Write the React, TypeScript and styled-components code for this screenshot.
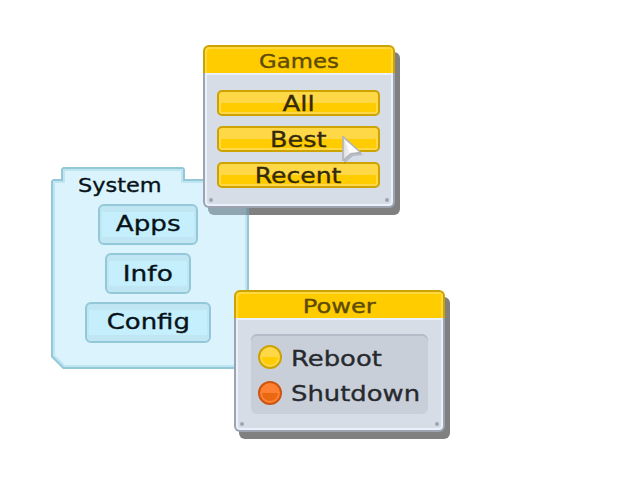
import React from 'react';
import styled, { createGlobalStyle } from 'styled-components';

const Global = createGlobalStyle`
  * { box-sizing: border-box; }
  body { margin: 0; background: #fff; }
`;

const Desktop = styled.main`
  position: relative;
  width: 640px;
  height: 480px;
  overflow: hidden;
  background: #fff;
  font-family: 'DejaVu Sans', sans-serif;
`;

const Label = styled.span<{ $size?: number; $stretch: number; $left?: boolean; $dy?: number }>`
  display: block;
  white-space: nowrap;
  line-height: 26px;
  font-size: ${p => p.$size ?? 22}px;
  -webkit-text-stroke: 0.35px currentColor;
  transform: translateY(${p => p.$dy ?? 0}px) scaleX(${p => p.$stretch});
  transform-origin: ${p => (p.$left ? 'left' : 'center')} center;
`;

/* Grey windows */
const WindowShadow = styled.div<{ $x: number; $y: number; $w: number; $h: number; $fill?: string }>`
  position: absolute;
  left: ${p => p.$x + 5}px;
  top: ${p => p.$y + 7}px;
  width: ${p => p.$w}px;
  height: ${p => p.$h}px;
  border-radius: 6px;
  background: ${p => p.$fill ?? '#808080'};
`;

const WindowFrame = styled.section<{ $x: number; $y: number; $w: number; $h: number }>`
  position: absolute;
  left: ${p => p.$x}px;
  top: ${p => p.$y}px;
  width: ${p => p.$w}px;
  height: ${p => p.$h}px;
  display: flex;
  flex-direction: column;
  border-radius: 6px;
`;

const TitleBar = styled.header`
  flex: 0 0 28px;
  display: flex;
  justify-content: center;
  align-items: center;
  border: 2px solid #cca300;
  border-bottom: 0;
  border-radius: 6px 6px 0 0;
  background: #ffcc00;
  box-shadow: inset 2px 2px #ffd83f, inset -2px 0 #ffd83f;
  color: #5c4a06;
`;

const WindowBody = styled.div<{ $pad: string }>`
  position: relative;
  flex: 1;
  display: flex;
  flex-direction: column;
  gap: 10px;
  padding: ${p => p.$pad};
  border: 2px solid #9ba4b0;
  border-top: 0;
  border-radius: 0 0 6px 6px;
  background: #d6dde7;
  box-shadow: inset 0 0 0 2px #eaf1fb;
`;

const Screw = styled.i<{ $right?: boolean }>`
  position: absolute;
  bottom: 4px;
  ${p => (p.$right ? 'right: 4px;' : 'left: 4px;')}
  width: 4px;
  height: 4px;
  border-radius: 50%;
  background: #9ba4b0;
`;

const GoldButton = styled.div`
  height: 26px;
  display: flex;
  justify-content: center;
  align-items: center;
  border: 2px solid #cca300;
  border-radius: 5px;
  color: #332a0a;
  background: linear-gradient(#ffcc00, #ffcc00) 2px 11px / calc(100% - 4px) 9px no-repeat #ffd847;
`;

const Group = styled.div`
  height: 80px;
  display: flex;
  flex-direction: column;
  gap: 12px;
  padding: 11px 7px;
  border-radius: 6px;
  background: #c9cfd9;
  box-shadow: inset 0 2px #b5bcc9;
  color: #262a2e;
`;

const Option = styled.div`
  height: 24px;
  display: flex;
  align-items: center;
  gap: 9px;
`;

const Bulb = styled.span<{ $edge: string; $top: string; $bottom: string }>`
  flex: none;
  width: 24px;
  height: 24px;
  display: flex;
  justify-content: center;
  align-items: flex-end;
  padding-bottom: 2px;
  border: 2px solid ${p => p.$edge};
  border-radius: 50%;
  background: ${p => p.$top};
  &::after {
    content: '';
    width: 16px;
    height: 8px;
    border-radius: 0 0 8px 8px;
    background: ${p => p.$bottom};
  }
`;

/* Blue folder panel */
const Folder = styled.section`
  position: absolute;
  left: 51px;
  top: 167px;
  width: 198px;
  height: 202px;
`;

const FolderLayer = styled.div<{ $fill: string; $shape: string }>`
  position: absolute;
  inset: 0;
  background: ${p => p.$fill};
  clip-path: polygon(${p => p.$shape});
`;

const FolderContent = styled.div`
  position: relative;
  display: flex;
  flex-direction: column;
  align-items: center;
  gap: 8px;
  padding: 4px 4px 0 0;
  color: #071318;
`;

const FolderTitle = styled.div`
  align-self: stretch;
  height: 25px;
  padding-left: 27px;
`;

const IceButton = styled.div<{ $w: number }>`
  width: ${p => p.$w}px;
  height: 41px;
  display: flex;
  justify-content: center;
  align-items: center;
  border: 2px solid #94c8d8;
  border-radius: 6px;
  background:
    linear-gradient(#c5effd, #c5effd) 2px 6px / calc(100% - 4px) 25px no-repeat,
    #c0e6f3;
`;

const Pointer = styled.svg`
  position: absolute;
  left: 338px;
  top: 132px;
`;

const px = (points: number[][]) => points.map(([x, y]) => `${x}px ${y}px`).join(', ');

const edge = px([[0, 14], [2, 12], [10, 12], [10, 2], [12, 0], [132, 0], [134, 2], [134, 12], [196, 12], [198, 14], [198, 202], [12, 202], [0, 190]]);
const rim = px([[2, 14], [12, 14], [12, 2], [132, 2], [132, 14], [196, 14], [196, 200], [13, 200], [2, 189]]);
const face = px([[4, 16], [14, 16], [14, 4], [130, 4], [130, 16], [194, 16], [194, 198], [14, 198], [4, 188]]);

const games = { $x: 203, $y: 45, $w: 192, $h: 163 };
const power = { $x: 234, $y: 290, $w: 211, $h: 142 };

export default function App() {
  return (
    <>
      <Global />
      <Desktop>
        <Folder>
          <FolderLayer $fill="#94c8d8" $shape={edge} />
          <FolderLayer $fill="#bfe5f1" $shape={rim} />
          <FolderLayer $fill="#daf3fd" $shape={face} />
          <FolderContent>
            <FolderTitle><Label $size={20} $stretch={1.12} $dy={1} $left>System</Label></FolderTitle>
            <IceButton $w={100}><Label $stretch={1.19} $dy={-1}>Apps</Label></IceButton>
            <IceButton $w={86}><Label $stretch={1.2}>Info</Label></IceButton>
            <IceButton $w={126}><Label $stretch={1.18} $dy={-1}>Config</Label></IceButton>
          </FolderContent>
        </Folder>

        <WindowShadow {...games} $fill="linear-gradient(90deg, #8fa6b1 38px, #7999a6 38px 41px, #808080 41px)" />
        <WindowFrame {...games}>
          <TitleBar><Label $size={20} $stretch={1.14} $dy={1}>Games</Label></TitleBar>
          <WindowBody $pad="17px 13px 0 12px">
            <GoldButton><Label $stretch={1.18} $dy={1}>All</Label></GoldButton>
            <GoldButton><Label $stretch={1.16} $dy={1}>Best</Label></GoldButton>
            <GoldButton><Label $stretch={1.14} $dy={1}>Recent</Label></GoldButton>
            <Screw /><Screw $right />
          </WindowBody>
        </WindowFrame>

        <WindowShadow {...power} />
        <WindowFrame {...power}>
          <TitleBar><Label $size={20} $stretch={1.21} $dy={1}>Power</Label></TitleBar>
          <WindowBody $pad="16px 15px 0">
            <Group>
              <Option>
                <Bulb $edge="#cca300" $top="#ffd847" $bottom="#ffcc00" />
                <Label $stretch={1.175} $dy={2} $left>Reboot</Label>
              </Option>
              <Option>
                <Bulb $edge="#cc5512" $top="#ff8033" $bottom="#eb6813" />
                <Label $stretch={1.175} $dy={1} $left>Shutdown</Label>
              </Option>
            </Group>
            <Screw /><Screw $right />
          </WindowBody>
        </WindowFrame>

        <Pointer width="28" height="34" viewBox="0 0 28 34">
          <defs>
            <linearGradient id="pointer" x1="0" y1="0" x2="1" y2="0">
              <stop offset="0" stopColor="#dedee0" />
              <stop offset=".6" stopColor="#fff" />
            </linearGradient>
          </defs>
          <path d="M6 7 L25 23 L15 24 L6 32 Z" fill="#606775" opacity=".28" />
          <path d="M5 4.5 L22.5 20.5 L13 21.5 L5 28.5 Z" fill="url(#pointer)" stroke="#b3b3b8" strokeWidth="1.6" strokeLinejoin="round" />
          <path d="M6.5 8 L20.5 20 L12 20.5 Z" fill="#fff" />
        </Pointer>
      </Desktop>
    </>
  );
}
